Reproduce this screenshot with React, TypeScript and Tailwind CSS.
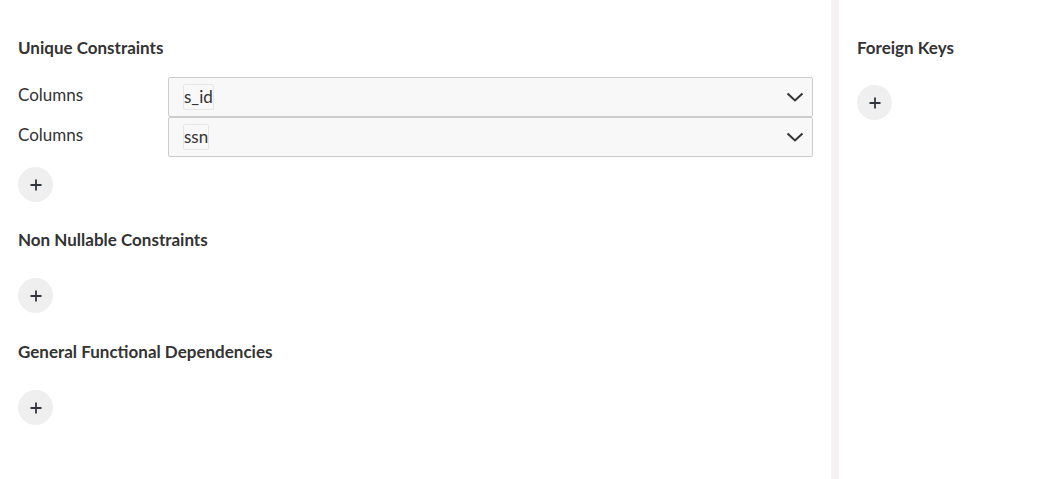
import React from 'react';

const font = { fontFamily: '"Source Sans Pro", "Lato", "Noto Sans", sans-serif' };

const PlusButton = () => (
    <button className="flex items-center justify-center w-[35px] h-[35px] rounded-full bg-[#efefef] text-[#333]">
        <svg width="12" height="12" viewBox="0 0 12 12">
            <path d="M6 0.5v11M0.5 6h11" stroke="#31333f" strokeWidth="1.8" />
        </svg>
    </button>
);

const Chevron = () => (
    <svg width="18" height="10" viewBox="0 0 18 10" fill="none">
        <path d="M1.5 1.5l7.5 7 7.5-7" stroke="#333" strokeWidth="2" />
    </svg>
);

const ColumnRow = ({ value }: { value: string }) => (
    <div className="flex items-center h-[40px]">
        <div className="w-[150px] text-[17px] text-[#333] pb-[4px]">Columns</div>
        <div className="flex-1 flex items-center justify-between h-[40px] bg-[#f8f8f8] border border-[#cccccc] rounded-[2px] pl-[14px] pr-[8px]">
            <span className="border border-[#e6e6e6] rounded-[2px] text-[17px] leading-[24px] text-[#333]">{value}</span>
            <Chevron />
        </div>
    </div>
);

const Section = ({ title, children }: { title: string; children?: React.ReactNode }) => (
    <div className="flex flex-col">
        <h3 className="text-[17px] font-bold text-[#333] leading-[20px]">{title}</h3>
        <div className="mt-[19px]">{children}</div>
    </div>
);

const App = () => {
    return (
        <div className="flex w-[1044px] h-[479px] bg-white" style={font}>
            <div className="w-[831px] pl-[18px] pr-[18px] pt-[38px]">
                <Section title="Unique Constraints">
                    <div className="flex flex-col">
                        <ColumnRow value="s_id" />
                        <ColumnRow value="ssn" />
                    </div>
                    <div className="mt-[10px]">
                        <PlusButton />
                    </div>
                </Section>
                <div className="mt-[28px]">
                    <Section title="Non Nullable Constraints">
                        <div className="mt-[9px]">
                            <PlusButton />
                        </div>
                    </Section>
                </div>
                <div className="mt-[29px]">
                    <Section title="General Functional Dependencies">
                        <div className="mt-[9px]">
                            <PlusButton />
                        </div>
                    </Section>
                </div>
            </div>

            <div className="w-[8px] bg-[#f4f2f3]" />

            <div className="flex-1 pl-[18px] pt-[38px]">
                <h3 className="text-[17px] font-bold text-[#333] leading-[20px]">Foreign Keys</h3>
                <div className="mt-[27px]">
                    <PlusButton />
                </div>
            </div>
        </div>
    );
};

export default App;
